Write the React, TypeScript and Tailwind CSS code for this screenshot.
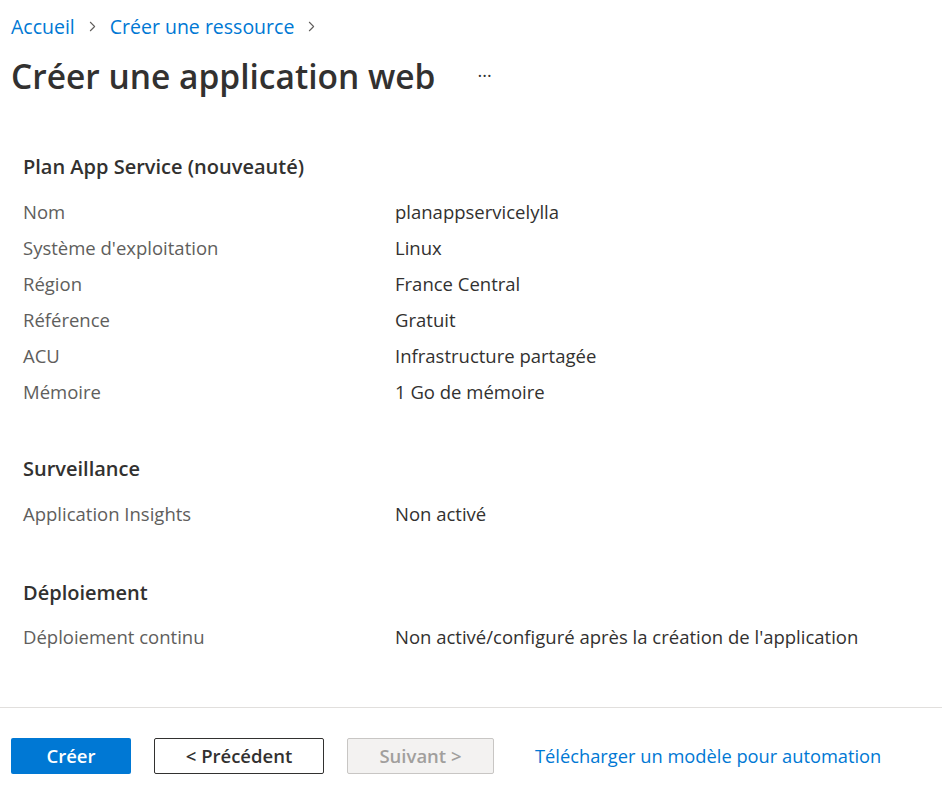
import React from "react";
import { ChevronRight } from "lucide-react";

const font = { fontFamily: '"Open Sans", "Noto Sans", sans-serif' };

const Row = ({ label, value }: { label: string; value: string }) => (
  <div className="flex h-[36px] items-center">
    <div className="w-[372px] text-[#605e5c]">{label}</div>
    <div className="text-[#323130]">{value}</div>
  </div>
);

const App = () => {
  return (
    <div className="h-[796px] w-[942px] bg-white text-[18.5px]" style={font}>
      <div className="flex h-[52px] items-center gap-[9px] px-[11px] pt-[1px] text-[19.5px] text-[#0078d4]">
        <span>Accueil</span>
        <ChevronRight size={17} color="#605e5c" strokeWidth={1.5} />
        <span>Créer une ressource</span>
        <ChevronRight size={17} color="#605e5c" strokeWidth={1.5} />
      </div>
      <div className="flex h-[48px] items-center px-[11px]">
        <h1 className="text-[33.5px] font-semibold text-[#323130]">Créer une application web</h1>
        <span className="ml-[42px] pb-[2px] text-[18px] text-[#323130]">···</span>
      </div>

      <div className="px-[23px] pt-[49px]">
        <h2 className="flex h-[36px] items-center text-[20px] font-semibold text-[#323130]">
          Plan App Service (nouveauté)
        </h2>
        <div className="pt-[9px]">
          <Row label="Nom" value="planappservicelylla" />
          <Row label="Système d'exploitation" value="Linux" />
          <Row label="Région" value="France Central" />
          <Row label="Référence" value="Gratuit" />
          <Row label="ACU" value="Infrastructure partagée" />
          <Row label="Mémoire" value="1 Go de mémoire" />
        </div>

        <h2 className="mt-[41px] flex h-[36px] items-center text-[20px] font-semibold text-[#323130]">
          Surveillance
        </h2>
        <div className="pt-[9px]">
          <Row label="Application Insights" value="Non activé" />
        </div>

        <h2 className="mt-[43px] flex h-[36px] items-center text-[20px] font-semibold text-[#323130]">
          Déploiement
        </h2>
        <div className="pt-[8px]">
          <Row label="Déploiement continu" value="Non activé/configuré après la création de l'application" />
        </div>
      </div>

      <div className="mt-[52px] border-t border-[#e1dfdd]" />

      <div className="flex items-center px-[11px] pt-[30px]">
        <button className="h-[36px] w-[120px] rounded-[2px] bg-[#0078d4] font-semibold text-white">
          Créer
        </button>
        <button className="ml-[23px] h-[36px] w-[170px] rounded-[2px] border border-[#323130] bg-white font-semibold text-[#323130]">
          &lt; Précédent
        </button>
        <button className="ml-[23px] h-[36px] w-[147px] rounded-[2px] border border-[#c8c6c4] bg-[#f3f2f1] font-semibold text-[#a19f9d]">
          Suivant &gt;
        </button>
        <span className="ml-[41px] text-[18.3px] text-[#0078d4]">Télécharger un modèle pour automation</span>
      </div>
    </div>
  );
};

export default App;
